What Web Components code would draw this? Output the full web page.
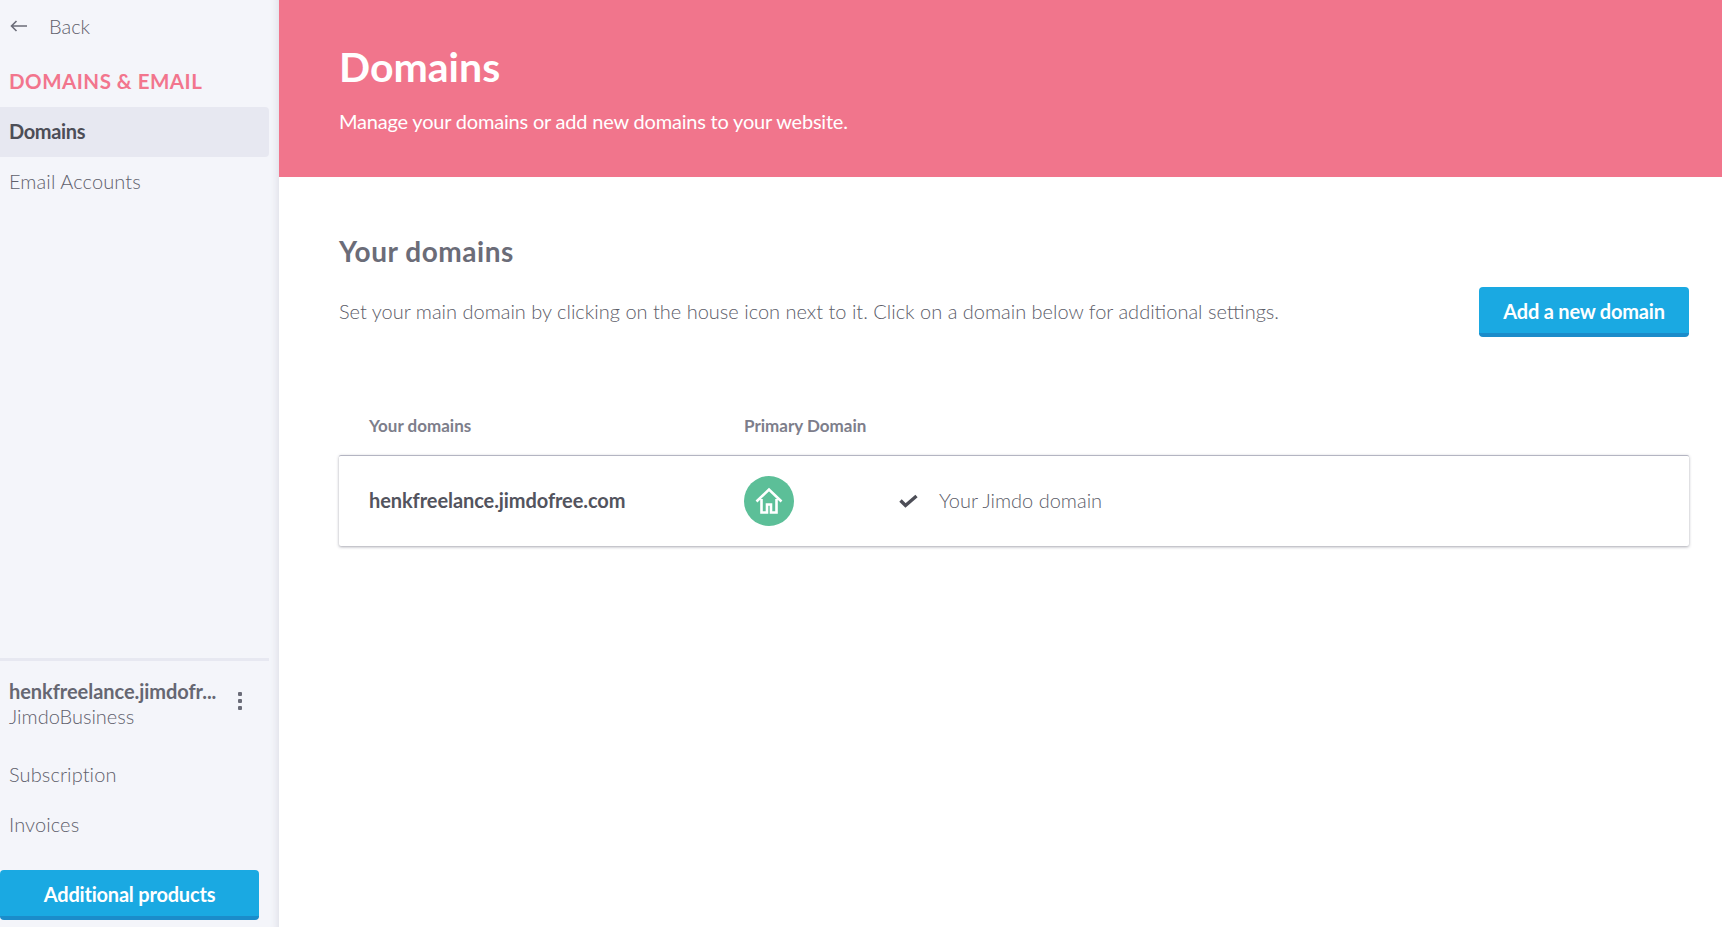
<!DOCTYPE html>
<html lang="en">
<head>
<meta charset="utf-8">
<title>Domains</title>
<style>
  html, body { margin: 0; height: 100%; background: #fff; }
  body { font-family: Lato, "Open Sans", sans-serif; font-weight: 300; color: #5c5d69; }
  app-shell { height: 927px; }
</style>
</head>
<body>
<app-shell>
  <side-bar slot="side">
    <nav-item>Email Accounts</nav-item>
  </side-bar>
  <page-header slot="head" heading="Domains">Manage your domains or add new domains to your website.</page-header>
  <domains-panel></domains-panel>
</app-shell>

<script>
class AppShell extends HTMLElement {
  connectedCallback() {
    let root = this.attachShadow({ mode: "open" });
    root.innerHTML = `
    <style>
      :host { display: flex; overflow: hidden; }
      .main { flex: 1; min-width: 0; display: flex; flex-direction: column; }
    </style>
    <slot name="side"></slot>
    <div class="main">
      <slot name="head"></slot>
      <slot></slot>
    </div>
    `;
  }
}

class BlueButton extends HTMLElement {
  connectedCallback() {
    let root = this.attachShadow({ mode: "open" });
    root.innerHTML = `
    <style>
      :host {
        display: flex; align-items: center; justify-content: center;
        box-sizing: border-box; height: 50px; padding-top: 1px;
        background: #1aa9e2; border-bottom: 4px solid #1b8cca; border-radius: 4px;
        color: #fff; font-size: 20px; font-weight: 700; letter-spacing: -0.2px; white-space: nowrap;
      }
    </style>
    <slot></slot>
    `;
  }
}

class NavItem extends HTMLElement {
  static get observedAttributes() {
    return ["active"];
  }

  connectedCallback() {
    let root = this.attachShadow({ mode: "open" });
    root.innerHTML = `
    <style>
      :host {
        display: flex; align-items: center; box-sizing: border-box; height: 50px; padding: 0 0 2px 9px;
        font-size: 20px; color: #5f606c; letter-spacing: 0.1px; border-radius: 0 4px 4px 0;
      }
      :host([active]) { background: #e7e8f1; color: #4d4e57; font-weight: 700; letter-spacing: -0.35px; }
    </style>
    <slot></slot>
    `;
  }
}

class SideBar extends HTMLElement {
  connectedCallback() {
    let root = this.attachShadow({ mode: "open" });
    root.innerHTML = `
    <style>
      :host {
        display: flex; flex-direction: column; flex: none; box-sizing: border-box;
        width: 279px; height: 927px; padding-right: 10px;
        background: #f4f5fa; box-shadow: inset -9px 0 7px -7px #dfe0e8;
      }
      .back { display: flex; align-items: center; box-sizing: border-box; height: 54px; padding-bottom: 2px; font-size: 20px; color: #5f606c; }
      .back svg { margin-left: 10px; margin-right: 22px; }
      h2 {
        margin: 0; height: 53px; line-height: 54px; padding-left: 9px;
        color: #f2758d; font-size: 20.5px; font-weight: 700; letter-spacing: 0.5px;
      }
      .spacer { flex: 1; }
      hr { margin: 0; border: 0; height: 3px; background: #e7e8f1; flex: none; }
      .site { display: flex; align-items: center; padding: 17px 0 0 9px; height: 52px; }
      .names { width: 216px; font-size: 20px; line-height: 25px; color: #5f606c; }
      .names b { display: block; color: #666772; font-weight: 700; letter-spacing: -0.05px; white-space: nowrap; overflow: hidden; text-overflow: ellipsis; }
      .dots { display: flex; flex-direction: column; gap: 3px; margin: 0 0 7px 13px; }
      .dots i { width: 4px; height: 4px; background: #6b6c78; border-radius: 1px; }
      .links { margin-top: 20px; }
      blue-button { margin: 20px 10px 7px 0; }
    </style>
    <div class="back">
      <svg width="17" height="12" viewBox="0 0 17 12" fill="none" stroke="#6b6c78" stroke-width="1.6"><path d="M17 6H1.5M6.5 1L1.5 6l5 5"/></svg>
      <span>Back</span>
    </div>
    <h2>DOMAINS &amp; EMAIL</h2>
    <nav-item active>Domains</nav-item>
    <slot></slot>
    <div class="spacer"></div>
    <hr>
    <div class="site">
      <div class="names">
        <b>henkfreelance.jimdofr...</b>
        JimdoBusiness
      </div>
      <div class="dots"><i></i><i></i><i></i></div>
    </div>
    <div class="links">
      <nav-item>Subscription</nav-item>
      <nav-item>Invoices</nav-item>
    </div>
    <blue-button>Additional products</blue-button>
    `;
  }
}

class PageHeader extends HTMLElement {
  connectedCallback() {
    let root = this.attachShadow({ mode: "open" });
    root.innerHTML = `
    <style>
      :host {
        display: block; box-sizing: border-box; height: 177px; padding: 41px 60px 0 60px;
        background: #f1758c; color: #fff;
      }
      h1 { margin: 0; font-size: 41px; line-height: 52px; font-weight: 700; letter-spacing: 0; }
      p { margin: 15px 0 0; font-size: 20px; line-height: 26px; font-weight: 400; letter-spacing: -0.2px; }
    </style>
    <h1></h1>
    <p><slot></slot></p>
    `;
    root.querySelector("h1").textContent = this.getAttribute("heading");
  }
}

class DomainRow extends HTMLElement {
  connectedCallback() {
    let root = this.attachShadow({ mode: "open" });
    root.innerHTML = `
    <style>
      :host {
        display: flex; align-items: center; box-sizing: border-box; height: 91px;
        border-top: 1px solid #b4b5c2; background: #fff;
        box-shadow: 0 1px 3px rgba(60, 60, 80, .45);
        font-size: 20px; border-radius: 2px;
      }
      .name { width: 375px; margin-left: 30px; margin-bottom: 2px; color: #53545e; font-weight: 700; letter-spacing: -0.08px; }
      .home {
        width: 50px; height: 50px; border-radius: 50%; background: #5cbf98;
        display: flex; align-items: center; justify-content: center;
      }
      .check { margin-left: 105px; margin-right: 21px; display: flex; }
      .type { color: #5c5d69; margin-bottom: 2px; }
    </style>
    <span class="name"><slot></slot></span>
    <span class="home">
      <svg width="28" height="28" viewBox="0 0 28 28" fill="none" stroke="#fff" stroke-width="2.6"><path d="M1.500 14.500L14 2.500l12.500 12M6.500 12v13.500h5.500v-8h4v8h5.500V12"/></svg>
    </span>
    <span class="check">
      <svg width="19" height="14" viewBox="0 0 19 14" fill="none" stroke="#4d4e57" stroke-width="3.400"><path d="M1.500 6.500l5 5L17.500 2"/></svg>
    </span>
    <span class="type">Your Jimdo domain</span>
    `;
  }
}

class DomainsPanel extends HTMLElement {
  connectedCallback() {
    let root = this.attachShadow({ mode: "open" });
    root.innerHTML = `
    <style>
      :host { display: block; padding: 55px 33px 0 60px; }
      h2 { margin: 0; font-size: 28px; line-height: 38px; font-weight: 700; color: #6b6c78; letter-spacing: 0.55px; }
      .intro { display: flex; align-items: center; justify-content: space-between; margin-top: 17px; font-size: 20px; color: #5c5d69; }
      .intro span { position: relative; top: -1px; }
      blue-button { width: 210px; margin-right: 0; }
      .cols { display: flex; margin-top: 14px; padding: 45px 0 0 30px; align-items: center; box-sizing: border-box; height: 104px;
        font-size: 17px; font-weight: 700; color: #7d7e8b; }
      .cols span:first-child { width: 375px; }
    </style>
    <h2>Your domains</h2>
    <div class="intro">
      <span>Set your main domain by clicking on the house icon next to it. Click on a domain below for additional settings.</span>
      <blue-button>Add a new domain</blue-button>
    </div>
    <div class="cols"><span>Your domains</span><span>Primary Domain</span></div>
    <domain-row>henkfreelance.jimdofree.com</domain-row>
    `;
  }
}

window.customElements.define("app-shell", AppShell);
window.customElements.define("blue-button", BlueButton);
window.customElements.define("nav-item", NavItem);
window.customElements.define("side-bar", SideBar);
window.customElements.define("page-header", PageHeader);
window.customElements.define("domain-row", DomainRow);
window.customElements.define("domains-panel", DomainsPanel);
</script>
</body>
</html>
